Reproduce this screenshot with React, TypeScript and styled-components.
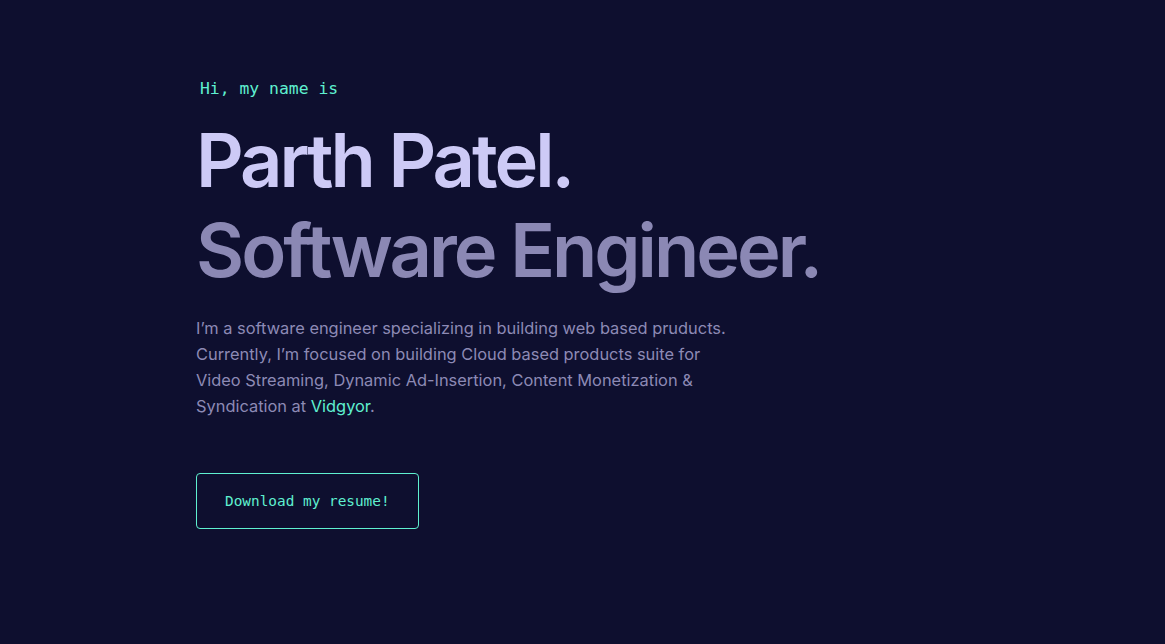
import React from "react";
import styled, { createGlobalStyle } from "styled-components";

const Global = createGlobalStyle`
  html, body { margin: 0; padding: 0; background: #0e0f2f; }
  body { font-family: Inter, "Noto Sans", sans-serif; -webkit-font-smoothing: antialiased; }
  * { box-sizing: border-box; }
`;

const Page = styled.main`
  min-height: 644px;
  background: #0e0f2f;
  padding: 78px 0 0 196px;
`;

const Hero = styled.section`
  display: flex;
  flex-direction: column;
  align-items: flex-start;
`;

const Greeting = styled.h1`
  margin: 0 0 15px 4px;
  font-family: "DejaVu Sans Mono", monospace;
  font-weight: 400;
  font-size: 16.4px;
  line-height: 22px;
  color: #5ff0d0;
`;

const Title = styled.h2<{ $tone: "bright" | "dim" }>`
  margin: 0;
  font-family: Inter, "Noto Sans", sans-serif;
  font-weight: 600;
  font-size: 74px;
  line-height: 90px;
  letter-spacing: -3px;
  color: ${(p) => (p.$tone === "bright" ? "#cdcaf6" : "#8b88b4")};
`;

const Bio = styled.p`
  margin: 20px 0 0;
  max-width: 540px;
  font-family: Inter, "Noto Sans", sans-serif;
  font-size: 16.4px;
  line-height: 26px;
  color: #8d8ab5;
`;

const Link = styled.a`
  color: #5ff0d0;
  text-decoration: none;
`;

const Button = styled.a`
  margin-top: 54px;
  display: inline-block;
  padding: 18px 28px;
  border: 1px solid #5ff0d0;
  border-radius: 4px;
  font-family: "DejaVu Sans Mono", monospace;
  font-size: 14.4px;
  line-height: 18px;
  color: #5ff0d0;
  text-decoration: none;
`;

export default function App() {
  return (
    <>
      <Global />
      <Page>
        <Hero>
          <Greeting>Hi, my name is</Greeting>
          <Title $tone="bright">Parth Patel.</Title>
          <Title $tone="dim">Software Engineer.</Title>
          <Bio>
            I’m a software engineer specializing in building web based pruducts.
            Currently, I’m focused on building Cloud based products suite for
            Video Streaming, Dynamic Ad-Insertion, Content Monetization &amp;
            Syndication at <Link href="#">Vidgyor</Link>.
          </Bio>
          <Button href="#">Download my resume!</Button>
        </Hero>
      </Page>
    </>
  );
}
